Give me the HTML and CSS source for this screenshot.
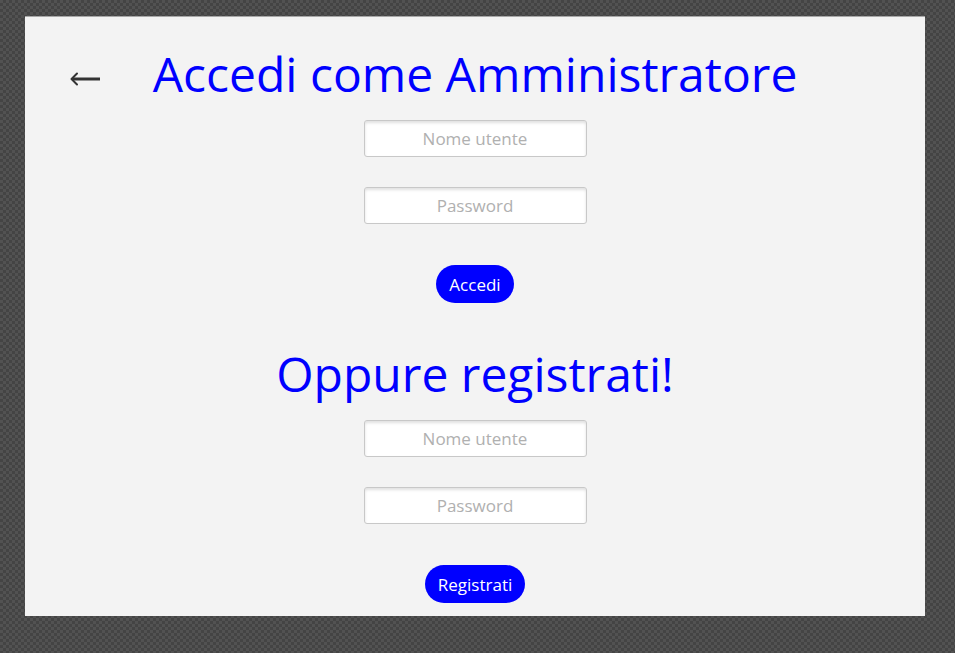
FILE: index.html
```html
<!DOCTYPE html>
<html lang="it">
<head>
<meta charset="utf-8">
<title>Accedi come Amministratore</title>
<link rel="stylesheet" href="styles.css">
</head>
<body>
<main class="panel">
  <header class="title-row">
    <a class="back" href="#" aria-label="Indietro">
      <svg width="30" height="14" viewBox="0 0 30 14" aria-hidden="true">
        <path d="M2 7H30" stroke="#333" stroke-width="3" fill="none"/>
        <path d="M7 1.5L1.5 7L7 12.5" stroke="#333" stroke-width="2" fill="none" stroke-linecap="round" stroke-linejoin="round"/>
      </svg>
    </a>
    <h1 class="title">Accedi come Amministratore</h1>
  </header>
  <form class="form">
    <input class="field" type="text" placeholder="Nome utente">
    <input class="field" type="password" placeholder="Password">
    <button class="btn" type="button">Accedi</button>
  </form>
  <h2 class="title title-sub">Oppure registrati!</h2>
  <form class="form">
    <input class="field" type="text" placeholder="Nome utente">
    <input class="field" type="password" placeholder="Password">
    <button class="btn" type="button">Registrati</button>
  </form>
</main>
</body>
</html>
```
FILE: styles.css
```css
html, body {
  margin: 0;
  height: 100%;
}
body {
  background-color: #4a4a4a;
  background-image: repeating-conic-gradient(#444 0 25%, #525252 0 50%);
  background-size: 6px 6px;
  font-family: "Open Sans", "Noto Sans", sans-serif;
  padding-top: 16px;
  padding-left: 25px;
  box-sizing: border-box;
}
.panel {
  width: 900px;
  height: 600px;
  background: #f3f3f3;
  border-top: 1px solid #a8a8a8;
  box-sizing: border-box;
  display: flex;
  flex-direction: column;
  align-items: center;
}
.title-row {
  position: relative;
  width: 100%;
  display: flex;
  justify-content: center;
}
.back {
  position: absolute;
  left: 45px;
  top: 55px;
  display: block;
  line-height: 0;
}
.title {
  margin: 0;
  color: #0000ff;
  font-weight: 400;
  font-size: 48px;
  line-height: 72px;
  margin-top: 21px;
  margin-bottom: 10px;
}
.title-sub {
  margin-top: 35px;
}
.form {
  display: flex;
  flex-direction: column;
  align-items: center;
}
.field {
  width: 223px;
  height: 37px;
  box-sizing: border-box;
  border: 1px solid #c8c8c8;
  border-radius: 3px;
  background: #fff;
  box-shadow: inset 0 2px 3px rgba(0,0,0,0.12);
  text-align: center;
  font-family: inherit;
  font-size: 17px;
  color: #333;
  margin-bottom: 30px;
}
.field::placeholder {
  color: #b0b0b0;
}
.btn {
  margin-top: 11px;
  height: 38px;
  padding: 0 13px;
  border: none;
  border-radius: 19px;
  background: #0000ff;
  color: #fff;
  font-family: inherit;
  font-size: 17px;
}
```
